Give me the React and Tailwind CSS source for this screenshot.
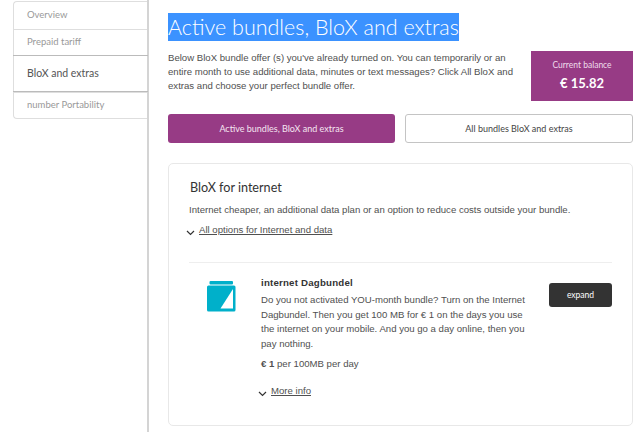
const navItems = [
  { name: 'Overview', height: 'h-[27px]' },
  { name: 'Prepaid tariff', height: 'h-[26px]' },
  { name: 'BloX and extras', height: 'h-[37px]', active: true },
  { name: 'number Portability', height: 'h-[26px]' },
]

const Chevron = () => (
  <svg className="w-[9px] h-[6px] text-[#333]" viewBox="0 0 9 6" fill="none" stroke="currentColor" strokeWidth="1.2">
    <path d="M1 1l3.5 3.5L8 1" />
  </svg>
)

const BundleIcon = () => (
  <svg className="w-[29px] h-[31px]" viewBox="0 0 29 31">
    <rect x="2.5" y="0" width="23.5" height="3.5" rx="1" fill="#00b0ca" />
    <rect x="0" y="4.5" width="28.5" height="26" rx="1.5" fill="#00b0ca" />
    <path d="M13.5 27.5L26 8V27.5z" fill="#fff" />
  </svg>
)

const App = () => {
  return (
    <div className="w-[640px] h-[432px] overflow-hidden bg-white flex font-['Liberation_Sans',sans-serif] text-[#505050]">
      <aside className="w-[149px] shrink-0 h-full pl-[13px] pt-px border-r-2 border-[#d4d4d4]">
        <nav className="rounded-l-[4px] border border-r-0 border-[#dedede] font-['Lato',sans-serif]">
          {navItems.map((item, i) => (
            <div
              key={item.name}
              className={
                'flex items-center pl-[13px] ' + item.height + ' ' +
                (i > 0 && !item.active ? 'border-t border-[#dedede] ' : '') +
                (item.active
                  ? 'border-y border-[#bbb] text-[10.5px] text-[#555] -mx-px pl-[14px]'
                  : 'text-[9.5px] text-[#999]')
              }
            >
              {item.name}
            </div>
          ))}
        </nav>
      </aside>

      <main className="w-[465px] ml-[19px] shrink-0">
        <h1 className="mt-[13px] w-fit h-[28px] bg-[#3b92ff] text-white text-[21.5px] leading-[28px] font-['Lato',sans-serif] font-light">
          Active bundles, BloX and extras
        </h1>

        <div className="mt-[9px] flex justify-between">
          <p className="w-[350px] pt-[1px] text-[9.6px] leading-[14.2px]">
            Below BloX bundle offer (s) you've already turned on. You can temporarily or an entire month to use additional data, minutes or text messages? Click All BloX and extras and choose your perfect bundle offer.
          </p>
          <div className="w-[102px] h-[50px] mt-px bg-[#973b85] text-white flex flex-col items-center pt-[8px] font-['Lato',sans-serif]">
            <span className="text-[8.5px] leading-[12px] text-[#f0dcec]">Current balance</span>
            <span className="mt-[4px] text-[13px] leading-[16px] font-bold">€ 15.82</span>
          </div>
        </div>

        <div className="mt-[13px] flex justify-between font-['Lato',sans-serif]">
          <button className="w-[227px] h-[29px] rounded-[3px] bg-[#973b85] text-[#f5e6f1] text-[9px]">
            Active bundles, BloX and extras
          </button>
          <button className="w-[228px] h-[29px] rounded-[3px] border border-[#c4c4c4] bg-white text-[#444] text-[9px]">
            All bundles BloX and extras
          </button>
        </div>

        <section className="mt-[20px] h-[263px] rounded-[5px] border border-[#e8e8e8] pl-[20px] pr-[20px]">
          <h2 className="mt-[15px] ml-px text-[12.6px] leading-[18px] text-[#333] font-['Lato',sans-serif]">BloX for internet</h2>
          <p className="mt-[6px] text-[9.6px] leading-[14px]">
            Internet cheaper, an additional data plan or an option to reduce costs outside your bundle.
          </p>
          <div className="mt-[6px] flex items-center gap-[4px] -ml-[3px]">
            <span className="pt-[5px]"><Chevron /></span>
            <a className="underline text-[9.6px] leading-[14px]">All options for Internet and data</a>
          </div>

          <div className="mt-[25px] border-t border-[#eee] flex pt-[12px]">
            <div className="w-[72px] shrink-0 pl-[18px] pt-[6px]">
              <BundleIcon />
            </div>
            <div className="w-[272px] shrink-0">
              <h3 className="text-[9.7px] leading-[14px] font-bold text-[#333] tracking-[0.2px] mt-px">internet Dagbundel</h3>
              <p className="mt-[3px] text-[9.6px] leading-[14.6px]">
                Do you not activated YOU-month bundle? Turn on the Internet Dagbundel. Then you get 100 MB for € 1 on the days you use the internet on your mobile. And you go a day online, then you pay nothing.
              </p>
              <p className="mt-[6px] text-[9.6px] leading-[14px]"><b>€ 1</b> per 100MB per day</p>
              <div className="mt-[13px] flex items-center gap-[4px] -ml-[3px]">
                <span className="pt-[5px]"><Chevron /></span>
                <a className="underline text-[9.6px] leading-[14px]">More info</a>
              </div>
            </div>
            <div className="ml-auto">
              <button className="mt-[8px] w-[63px] h-[24px] rounded-[3px] bg-[#333] text-white text-[8.5px] font-['Lato',sans-serif]">
                expand
              </button>
            </div>
          </div>
        </section>
      </main>
    </div>
  )
}

export default App
